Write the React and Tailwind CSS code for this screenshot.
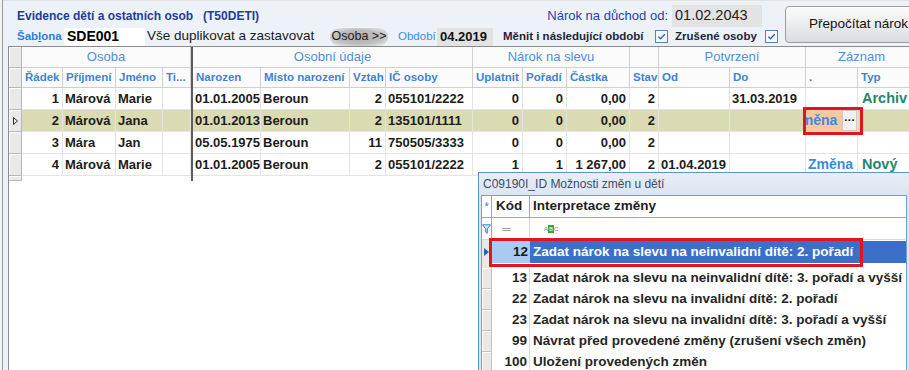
import React from 'react';

const cols = [
  { k: 'sel', w: 'w-[13px]' },
  { k: 'n', w: 'w-[41px]', h: 'Řádek', r: true },
  { k: 'pr', w: 'w-[53px]', h: 'Příjmení' },
  { k: 'j', w: 'w-[47px]', h: 'Jméno' },
  { k: 'ti', w: 'w-[28px]', h: 'Ti...' },
  { k: 'div', w: 'w-[2px]' },
  { k: 'nar', w: 'w-[68px]', h: 'Narozen' },
  { k: 'm', w: 'w-[89px]', h: 'Místo narození' },
  { k: 'v', w: 'w-[36px]', h: 'Vztah', r: true },
  { k: 'ic', w: 'w-[87px]', h: 'IČ osoby' },
  { k: 'u', w: 'w-[50px]', h: 'Uplatnit', r: true },
  { k: 'p', w: 'w-[44px]', h: 'Pořadí', r: true },
  { k: 'c', w: 'w-[63px]', h: 'Částka', r: true },
  { k: 's', w: 'w-[29px]', h: 'Stav', r: true },
  { k: 'od', w: 'w-[71px]', h: 'Od' },
  { k: 'do', w: 'w-[76px]', h: 'Do' },
  { k: 'dot', w: 'w-[52px]', h: '.' },
  { k: 'typ', w: 'w-[60px]', h: 'Typ' },
];

const rows = [
  { n: '1', pr: 'Márová', j: 'Marie', ti: '', nar: '01.01.2005', m: 'Beroun', v: '2', ic: '055101/2222', u: '0', p: '0', c: '0,00', s: '2', od: '', do: '31.03.2019', dot: '', typ: 'Archiv' },
  { n: '2', pr: 'Márová', j: 'Jana', ti: '', nar: '01.01.2013', m: 'Beroun', v: '2', ic: '135101/1111', u: '0', p: '0', c: '0,00', s: '2', od: '', do: '', dot: 'edit', typ: '', sel: true },
  { n: '3', pr: 'Mára', j: 'Jan', ti: '', nar: '05.05.1975', m: 'Beroun', v: '11', ic: '750505/3333', u: '0', p: '0', c: '0,00', s: '2', od: '', do: '', dot: '', typ: '' },
  { n: '4', pr: 'Márová', j: 'Marie', ti: '', nar: '01.01.2005', m: 'Beroun', v: '2', ic: '055101/2222', u: '1', p: '1', c: '1 267,00', s: '2', od: '01.04.2019', do: '', dot: 'Změna', typ: 'Nový' },
];

const pRows = [
  ['13', 'Zadat nárok na slevu na neinvalidní dítě: 3. pořadí a vyšší'],
  ['22', 'Zadat nárok na slevu na invalidní dítě: 2. pořadí'],
  ['23', 'Zadat nárok na slevu na invalidní dítě: 3. pořadí a vyšší'],
  ['99', 'Návrat před provedené změny (zrušení všech změn)'],
  ['100', 'Uložení provedených změn'],
];

function Check() {
  return (
    <div className="w-[13px] h-[13px] shrink-0 border border-[#5b80b3] bg-[#f3f7fc] flex items-center justify-center">
      <svg width="9" height="9" viewBox="0 0 9 9">
        <path d="M1.3 4.6 L3.5 6.8 L7.8 2.2" stroke="#2a63b8" strokeWidth="1.3" fill="none" />
      </svg>
    </div>
  );
}

function SelCell({ children, extra = '' }) {
  return (
    <div className={`w-[13px] shrink-0 h-full bg-[#e9e9e9] border-r border-b border-[#b8b8b8] shadow-[inset_1px_1px_0_#ffffff] flex items-center justify-center ${extra}`}>
      {children}
    </div>
  );
}

export default function App() {
  return (
    <div className="relative w-[909px] h-[370px] overflow-hidden bg-[#f0f0f0] font-[family-name:Liberation_Sans,Arial,sans-serif] text-[#1a1a1a]">
      <div className="flex h-full">
        <div className="w-[3px] shrink-0 bg-[#f2f2f2] border-r border-[#9c9c9c]" />
        <div className="flex-1 flex flex-col bg-[#edf2f8] min-w-0">
          {/* top area */}
          <div className="h-[46px] shrink-0 flex pt-[4px] border-t border-[#e2e2e2]">
            <div className="w-[782px] shrink-0 flex flex-col">
              <div className="h-[22px] flex items-center">
                <div className="pl-[14px] text-[12px] font-bold text-[#1f3b9e] whitespace-pre">Evidence dětí a ostatních osob   (T50DETI)</div>
                <div className="ml-auto mr-[23px] flex items-center">
                  <span className="text-[13px] text-[#2340b8] mr-[4px]">Nárok na důchod od:</span>
                  <div className="w-[90px] h-[22px] bg-[#e3e3e3] flex items-center pl-[3px] text-[14.5px] text-[#222]">01.02.2043</div>
                </div>
              </div>
              <div className="h-[19px] flex items-center pl-[14px]">
                <div className="w-[47px] shrink-0 text-[11.5px] font-bold text-[#2a80e0]">Šab<span className="underline">l</span>ona</div>
                <div className="w-[81px] h-[18px] shrink-0 bg-white flex items-center pl-[3px] text-[14px] font-bold text-black">SDE001</div>
                <div className="w-[185px] shrink-0 pl-[2px] text-[13.5px] text-[#1a1a1a] whitespace-nowrap">Vše duplikovat a zastavovat</div>
                <div className="w-[58px] h-[18px] shrink-0 rounded-full bg-[radial-gradient(ellipse_at_center,#acacac_0%,#bebebe_55%,#edf2f8_100%)] flex items-center justify-center text-[12.5px] text-[#222] whitespace-nowrap">Osoba &gt;&gt;</div>
                <div className="ml-[10px] w-[39px] shrink-0 text-[11.5px] text-[#3a8ee6]">Období</div>
                <div className="w-[56px] h-[18px] shrink-0 bg-[#e2e2e2] flex items-center pl-[3px] text-[13px] font-bold text-[#111]">04.2019</div>
                <div className="ml-[10px] w-[152px] shrink-0 text-[11.5px] font-bold text-[#1e2436] whitespace-nowrap">Měnit i následující období</div>
                <Check />
                <div className="ml-[7px] w-[90px] shrink-0 text-[11.5px] font-bold text-[#1e2436] whitespace-nowrap">Zrušené osoby</div>
                <Check />
              </div>
            </div>
            <div className="mt-[1px] h-[37px] w-[150px] shrink-0 rounded-[4px] border border-[#9c9c9c] bg-gradient-to-b from-[#fcfcfc] to-[#d9dde2] shadow-[inset_0_1px_0_#ffffff] flex items-center pl-[23px] text-[13.5px] text-[#111] whitespace-nowrap overflow-hidden">
              Přepočítat nárok na důchod
            </div>
          </div>

          {/* grid */}
          <div className="flex-1 ml-[5px] border-l border-t border-[#8a8a8a] bg-white flex flex-col min-w-0 overflow-hidden">
            {/* group header */}
            <div className="h-[21px] shrink-0 flex text-[13px] text-[#4b90dd]">
              <SelCell />
              <div className="w-[169px] shrink-0 border-r border-b border-[#cfcfcf] bg-[#fbfbfb] flex items-center justify-center">Osoba</div>
              <div className="w-[2px] shrink-0 bg-[#5c5c5c]" />
              <div className="w-[280px] shrink-0 border-r border-b border-[#cfcfcf] bg-[#fbfbfb] flex items-center justify-center">Osobní údaje</div>
              <div className="w-[157px] shrink-0 border-r border-b border-[#cfcfcf] bg-[#fbfbfb] flex items-center justify-center">Nárok na slevu</div>
              <div className="w-[29px] shrink-0 border-r border-b border-[#cfcfcf] bg-[#fbfbfb]" />
              <div className="w-[147px] shrink-0 border-r border-b border-[#cfcfcf] bg-[#fbfbfb] flex items-center justify-center">Potvrzení</div>
              <div className="w-[112px] shrink-0 border-r border-b border-[#cfcfcf] bg-[#fbfbfb] flex items-center justify-center">Záznam</div>
            </div>
            {/* column header */}
            <div className="h-[20px] shrink-0 flex text-[11.5px] font-bold text-[#3d83d8]">
              {cols.map((c) => {
                if (c.k === 'sel') return <SelCell key={c.k} />;
                if (c.k === 'div') return <div key={c.k} className="w-[2px] shrink-0 bg-[#5c5c5c]" />;
                return (
                  <div key={c.k} className={`${c.w} shrink-0 border-r border-b border-[#cfcfcf] bg-[#fbfbfb] flex items-center pl-[3px] whitespace-nowrap overflow-hidden`}>
                    {c.h}
                  </div>
                );
              })}
            </div>
            {/* rows */}
            {rows.map((r, i) => (
              <div key={i} className={`h-[22px] shrink-0 flex text-[13px] font-bold text-[#1c1c1c] ${r.sel ? 'bg-[#dadab3]' : 'bg-white'}`}>
                {cols.map((c) => {
                  if (c.k === 'sel')
                    return (
                      <SelCell key={c.k}>
                        {r.sel && (
                          <svg width="5" height="8" viewBox="0 0 5 8">
                            <path d="M0.5 0.5 L4.5 4 L0.5 7.5 Z" stroke="#222" strokeWidth="0.9" fill="none" />
                          </svg>
                        )}
                      </SelCell>
                    );
                  if (c.k === 'div') return <div key={c.k} className="w-[2px] shrink-0 bg-[#5c5c5c]" />;
                  if (c.k === 'dot') {
                    if (r.dot === 'edit')
                      return (
                        <div key={c.k} className="w-[52px] shrink-0 flex border-r border-b border-[#e4e4e4]">
                          <div className="w-[37px] bg-[#f9c8a0] overflow-hidden flex justify-end items-center pr-[5px]">
                            <span className="text-[14px] font-bold text-[#3a8be0] whitespace-nowrap">Změna</span>
                          </div>
                          <div className="w-[15px] bg-[#f1f1f1] border border-[#c8c8c8] flex items-center justify-center text-[11px] font-bold text-black leading-none">···</div>
                        </div>
                      );
                    return (
                      <div key={c.k} className="w-[52px] shrink-0 border-r border-b border-[#e4e4e4] flex items-center pl-[2px] text-[14px] font-bold text-[#3a8be0] whitespace-nowrap overflow-hidden">
                        {r.dot}
                      </div>
                    );
                  }
                  if (c.k === 'typ')
                    return (
                      <div key={c.k} className="w-[60px] shrink-0 border-b border-[#e4e4e4] flex items-center pl-[4px] text-[14.5px] font-bold text-[#23886b] whitespace-nowrap">
                        {r.typ}
                      </div>
                    );
                  return (
                    <div key={c.k} className={`${c.w} shrink-0 border-r border-b border-[#e4e4e4] flex items-center whitespace-nowrap overflow-hidden ${c.r ? 'justify-end pr-[3px]' : 'pl-[2px]'}`}>
                      {r[c.k]}
                    </div>
                  );
                })}
              </div>
            ))}
            <div className="h-[5px] shrink-0 flex">
              <SelCell />
              <div className="w-[169px] shrink-0" />
              <div className="w-[2px] shrink-0 bg-[#5c5c5c]" />
            </div>
          </div>
        </div>
      </div>

      {/* popup */}
      <div className="absolute left-[478px] top-[172px] w-[432px] h-[200px] border border-[#5a94cf] bg-[#dbe6f2] flex flex-col">
        <div className="h-[22px] shrink-0 flex items-center pl-[4px] text-[12px] text-[#3a4d68] bg-gradient-to-b from-[#e8eef6] to-[#dbe5f1] whitespace-nowrap">
          C09190I_ID Možnosti změn u dětí
        </div>
        <div className="flex-1 ml-[2px] mr-[2px] border-l border-t border-r border-[#6aa2da] bg-white flex flex-col overflow-hidden">
          <div className="h-[22px] shrink-0 flex border-b border-[#7aaedf] text-[13.5px] font-bold text-[#222]">
            <div className="w-[10px] shrink-0 border-r border-[#7aaedf] flex items-center justify-center text-[12px] text-[#3a8ee6] font-normal">*</div>
            <div className="w-[38px] shrink-0 border-r border-[#7aaedf] flex items-center pl-[4px]">Kód</div>
            <div className="flex-1 flex items-center pl-[3px] whitespace-nowrap">Interpretace změny</div>
          </div>
          <div className="h-[22px] shrink-0 flex border-b border-[#c9ddf1]">
            <div className="w-[10px] shrink-0 border-r border-[#7aaedf] flex items-center justify-center">
              <svg width="9" height="10" viewBox="0 0 9 10">
                <path d="M0.5 0.8 H8.5 L5.3 4.8 V9.3 L3.7 8.2 V4.8 Z" stroke="#3a7fd0" strokeWidth="1" fill="#d6e8fa" />
              </svg>
            </div>
            <div className="w-[38px] shrink-0 border-r border-[#d7d7d7] flex items-center pl-[10px] text-[12px] text-[#8a8a8a]">═</div>
            <div className="flex-1 flex items-center pl-[14px]">
              <span className="text-[6px] leading-none text-[#777]">A</span>
              <span className="text-[6px] leading-none bg-[#2aa84a] text-white px-[1px] py-[1px]">B</span>
              <span className="text-[6px] leading-none text-[#777]">C</span>
            </div>
          </div>
          <div className="h-[28px] shrink-0 flex items-start">
            <div className="w-[10px] shrink-0 h-full bg-[#e8e8e8] border-r border-[#c4c4c4] flex items-start justify-center pt-[8px]">
              <svg width="5" height="8" viewBox="0 0 5 8">
                <path d="M0 0 L5 4 L0 8 Z" fill="#2f62b0" />
              </svg>
            </div>
            <div className="w-[38px] shrink-0 h-[22px] mt-[1px] bg-[#a9cbf2] flex items-center justify-end pr-[2px] text-[13.5px] font-bold text-[#1a1a1a]">12</div>
            <div className="flex-1 h-[22px] mt-[1px] bg-[#3b6fca] flex items-center pl-[3px] text-[13.5px] font-bold text-white whitespace-nowrap">
              Zadat nárok na slevu na neinvalidní dítě: 2. pořadí
            </div>
          </div>
          {pRows.map(([k, t]) => (
            <div key={k} className="h-[21px] shrink-0 flex text-[13.5px] font-bold text-[#262626]">
              <div className="w-[10px] shrink-0 bg-[#e8e8e8] border-r border-b border-[#c4c4c4] shadow-[inset_1px_1px_0_#ffffff]" />
              <div className="w-[38px] shrink-0 border-r border-[#dcdcdc] flex items-center justify-end pr-[2px]">{k}</div>
              <div className="flex-1 flex items-center pl-[3px] whitespace-nowrap">{t}</div>
            </div>
          ))}
        </div>
      </div>

      {/* red highlight boxes */}
      <div className="absolute left-[803px] top-[107px] w-[60px] h-[28px] border-[3px] border-[#e2141d]" />
      <div className="absolute left-[489px] top-[238px] w-[374px] h-[29px] border-[3px] border-[#e2141d]" />
    </div>
  );
}
